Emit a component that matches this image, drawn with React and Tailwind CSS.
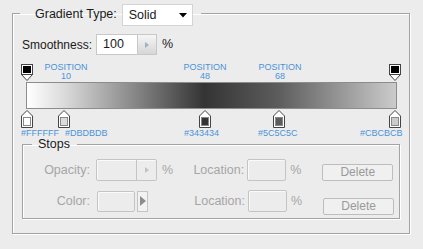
import React from "react";

const BLUE = "#4b93d9";

function TopMarker({ x }) {
  return (
    <svg
      className="absolute"
      style={{ left: x - 6, top: 4 }}
      width="12"
      height="17"
      viewBox="0 0 12 17"
    >
      <path d="M0.5 10.5 L11.5 10.5 L6 16.5 Z" fill="#fff" stroke="#444" />
      <rect x="0.5" y="0.5" width="11" height="10" fill="#fff" stroke="#444" />
      <rect x="2" y="2" width="8" height="7" fill="#000" />
    </svg>
  );
}

function BottomMarker({ x, color }) {
  return (
    <svg
      className="absolute"
      style={{ left: x - 6, top: 50 }}
      width="12"
      height="18"
      viewBox="0 0 12 18"
    >
      <path d="M0.5 17.5 L0.5 6 L6 0.5 L11.5 6 L11.5 17.5 Z" fill="#fff" stroke="#444" />
      <rect x="2.5" y="7.5" width="7" height="8" fill={color} stroke="#888" />
    </svg>
  );
}

const stops = [
  { x: 27, color: "#FFFFFF" },
  { x: 64, color: "#DBDBDB" },
  { x: 205, color: "#343434" },
  { x: 279, color: "#5C5C5C" },
  { x: 395, color: "#CBCBCB" },
];

const hexLabels = [
  { left: 21, text: "#FFFFFF" },
  { left: 65, text: "#DBDBDB" },
  { left: 184, text: "#343434" },
  { left: 258, text: "#5C5C5C" },
  { left: 360, text: "#CBCBCB" },
];

const positions = [
  { x: 66, pos: "10" },
  { x: 205, pos: "48" },
  { x: 280, pos: "68" },
];

function GradientEditor() {
  // origin of this box is x=22, y=60 in page coords
  const ox = 22;
  return (
    <div className="relative h-[78px] mt-[5px]">
      {positions.map((p) => (
        <div
          key={p.pos}
          className="absolute w-[60px] text-center text-[9px] leading-[9px]"
          style={{ left: p.x - ox - 30, top: 3, color: BLUE }}
        >
          <div>POSITION</div>
          <div>{p.pos}</div>
        </div>
      ))}
      <TopMarker x={27 - ox} />
      <TopMarker x={395 - ox} />
      <div
        className="absolute left-[4px] top-[22px] w-[371px] h-[27px] border border-[#8c8c8c]"
        style={{
          background:
            "linear-gradient(to right, #ffffff 0%, #dbdbdb 10%, #343434 48%, #5c5c5c 68%, #cbcbcb 100%)",
        }}
      />
      {stops.map((s) => (
        <BottomMarker key={s.color} x={s.x - ox} color={s.color} />
      ))}
      {hexLabels.map((h) => (
        <div
          key={h.text}
          className="absolute text-[9px] leading-[9px]"
          style={{ left: h.left - ox, top: 68.5, color: BLUE }}
        >
          {h.text}
        </div>
      ))}
    </div>
  );
}

function DisabledInput({ w, h }) {
  return (
    <div
      className="border border-[#c4c4c4] rounded-[2px] bg-[#ececec] shadow-[inset_1px_1px_0_#fafafa]"
      style={{ width: w, height: h }}
    />
  );
}

function App() {
  return (
    <div className="w-[423px] h-[249px] bg-[#ececec] overflow-hidden pt-[4px] pl-[12px] font-['Liberation_Sans',Arial,sans-serif] text-[12px] text-[#1a1a1a]">
      <fieldset className="w-[398px] h-[230px] border border-[#a3a3a3] shadow-[1px_1px_0_#fff,inset_1px_1px_0_#fff] px-[9px] pt-[12px]">
        <legend className="-ml-[2px] pl-[15px] pr-[8px]">
          <div className="flex items-start h-[18px] text-[12.5px]">
            <span className="leading-[20px]">Gradient Type:</span>
            <div className="ml-[5px] w-[71px] h-[22px] bg-white border border-[#d4d4d4] flex items-center pl-[6px] pr-[5px] justify-between">
              <span>Solid</span>
              <svg width="8" height="5" viewBox="0 0 8 5">
                <path d="M0 0 L8 0 L4 4.5 Z" fill="#000" />
              </svg>
            </div>
          </div>
        </legend>

        <div className="flex items-center h-[21px] text-[12.5px]">
          <span className="text-[12px]">Smoothness:</span>
          <div className="ml-[4px] w-[61px] h-[21px] bg-white border border-[#c8c8c8] flex">
            <div className="flex-1 pl-[6px] leading-[19px]">100</div>
            <div className="w-[19px] h-full bg-gradient-to-b from-[#f6f6f6] to-[#d6d6d6] border-l border-[#c8c8c8] flex items-center justify-center">
              <svg width="4" height="6" viewBox="0 0 4 6">
                <path d="M0 0 L4 3 L0 6 Z" fill="#9db2c8" />
              </svg>
            </div>
          </div>
          <span className="ml-[5px]">%</span>
        </div>

        <GradientEditor />

        <fieldset className="w-[378px] h-[81px] border border-[#a3a3a3] shadow-[1px_1px_0_#fff,inset_1px_1px_0_#fff] mt-[0px]">
          <legend className="ml-[9px] pl-[6px] pr-[7px] leading-[13px] text-[12.5px]">Stops</legend>
          <div className="flex flex-col gap-[9px] pt-[8px] text-[#a6a6a6] text-[12.5px]">
            <div className="flex items-center h-[22px]">
              <span className="w-[67px] text-right">Opacity:</span>
              <div className="ml-[6px] w-[61px] h-[22px] border border-[#c4c4c4] rounded-[2px] flex shadow-[inset_1px_1px_0_#fafafa]">
                <div className="flex-1" />
                <div className="w-[20px] h-full border-l border-[#c4c4c4] flex items-center justify-center">
                  <svg width="4" height="6" viewBox="0 0 4 6">
                    <path d="M0 0 L4 3 L0 6 Z" fill="#c2c2c2" />
                  </svg>
                </div>
              </div>
              <span className="ml-[5px]">%</span>
              <span className="w-[71px] text-right">Location:</span>
              <div className="ml-[3px]">
                <DisabledInput w={39} h={22} />
              </div>
              <span className="ml-[4px]">%</span>
              <button className="ml-[21px] w-[71px] h-[17px] border border-[#bdbdbd] rounded-[2px] bg-[#f0f0f0] text-[#9a9a9a] text-[12px] leading-[15px] mt-[5px]">
                Delete
              </button>
            </div>
            <div className="flex items-center h-[22px]">
              <span className="w-[67px] text-right">Color:</span>
              <div className="ml-[7px]">
                <DisabledInput w={38} h={21} />
              </div>
              <div className="ml-[2px] w-[11px] h-[21px] border border-[#c4c4c4] flex items-center justify-center bg-[#f2f2f2]">
                <svg width="6" height="10" viewBox="0 0 6 10">
                  <path d="M0 0 L6 5 L0 10 Z" fill="#8c8c8c" />
                </svg>
              </div>
              <span className="w-[97px] text-right">Location:</span>
              <div className="ml-[3px]">
                <DisabledInput w={39} h={22} />
              </div>
              <span className="ml-[4px]">%</span>
              <button className="ml-[21px] w-[71px] h-[17px] border border-[#bdbdbd] rounded-[2px] bg-[#f0f0f0] text-[#9a9a9a] text-[12px] leading-[15px] mt-[11px]">
                Delete
              </button>
            </div>
          </div>
        </fieldset>
      </fieldset>
    </div>
  );
}

export default App;
